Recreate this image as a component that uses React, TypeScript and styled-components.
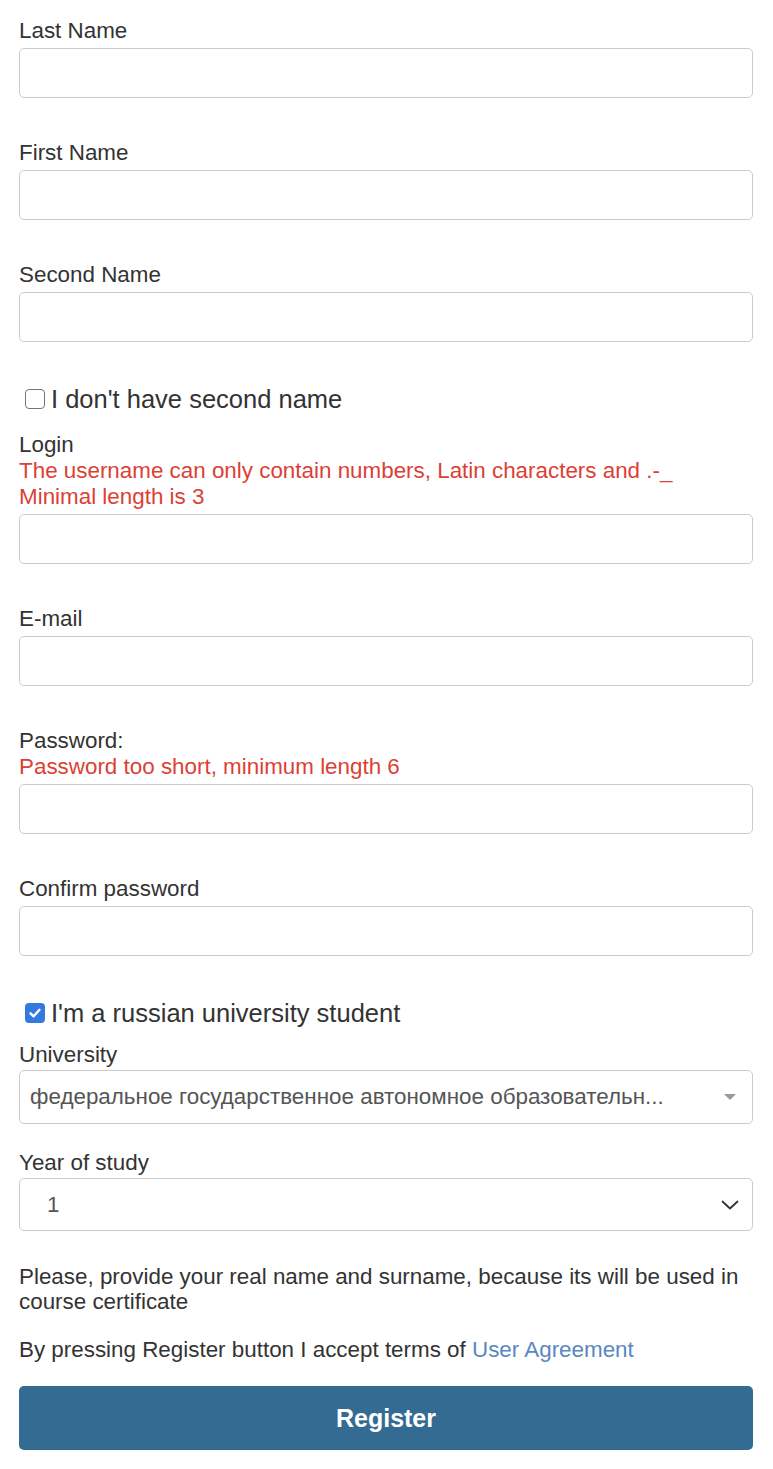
import React from "react";
import styled, { createGlobalStyle } from "styled-components";

const GlobalStyle = createGlobalStyle`
  html, body {
    margin: 0;
    padding: 0;
    background: #ffffff;
  }
  body {
    font-family: "Liberation Sans", Arial, sans-serif;
    color: #333333;
  }
  * { box-sizing: border-box; }
`;

const Form = styled.form`
  display: flex;
  flex-direction: column;
  padding: 18px 20px 19px 19px;
`;

const Group = styled.div<{ $mb?: number }>`
  display: flex;
  flex-direction: column;
  margin-bottom: ${(p) => (p.$mb ?? 42)}px;
`;

const Label = styled.label`
  font-size: 22.4px;
  line-height: 26px;
  color: #333333;
`;

const ErrorText = styled.div`
  font-size: 22.4px;
  line-height: 26px;
  color: #dc3f35;
`;

const Input = styled.input`
  height: 50px;
  margin-top: 4px;
  width: 100%;
  border: 1px solid #cccccc;
  border-radius: 5px;
  background: #ffffff;
  font-size: 20px;
  padding: 0 12px;
  font-family: inherit;
  outline: none;
`;

const CheckRow = styled.label<{ $mb: number }>`
  display: flex;
  align-items: center;
  height: 30px;
  padding-left: 6px;
  margin-bottom: ${(p) => p.$mb}px;
  font-size: 25.5px;
  color: #333333;
  cursor: pointer;
`;

const Box = styled.span<{ $checked: boolean }>`
  width: 20px;
  height: 20px;
  border-radius: 4px;
  border: ${(p) => (p.$checked ? "none" : "1.5px solid #767676")};
  background: ${(p) => (p.$checked ? "#3479e0" : "#ffffff")};
  display: flex;
  align-items: center;
  justify-content: center;
  margin-right: 6px;
  flex-shrink: 0;
`;

const HiddenCheck = styled.input`
  position: absolute;
  opacity: 0;
  width: 0;
  height: 0;
`;

const SelectBox = styled.div<{ $h: number }>`
  position: relative;
  margin-top: 2px;
  height: ${(p) => p.$h}px;
  border: 1px solid #cccccc;
  border-radius: 5px;
  display: flex;
  align-items: center;
  background: #ffffff;
`;

const SelectText = styled.span<{ $pl: number }>`
  flex: 1;
  padding-left: ${(p) => p.$pl}px;
  font-size: 22.4px;
  color: #555555;
  white-space: nowrap;
  overflow: hidden;
`;

const Arrow = styled.span`
  width: 40px;
  display: flex;
  align-items: center;
  justify-content: center;
  margin-right: 2px;
`;

const Paragraph = styled.p<{ $mb: number }>`
  margin: 0 0 ${(p) => p.$mb}px 0;
  font-size: 22.4px;
  line-height: 25px;
  color: #333333;
`;

const Link = styled.a`
  color: #5a87c0;
  text-decoration: none;
`;

const Button = styled.button`
  height: 64px;
  width: 100%;
  border: none;
  border-radius: 5px;
  background: #346b93;
  color: #ffffff;
  font-family: inherit;
  font-weight: bold;
  font-size: 25px;
  cursor: pointer;
`;

function Field({ label, errors = [] }: { label: string; errors?: string[] }) {
  return (
    <Group>
      <Label>{label}</Label>
      {errors.map((e) => (
        <ErrorText key={e}>{e}</ErrorText>
      ))}
      <Input />
    </Group>
  );
}

function Check({ label, checked, mb }: { label: string; checked: boolean; mb: number }) {
  return (
    <CheckRow $mb={mb}>
      <HiddenCheck type="checkbox" defaultChecked={checked} />
      <Box $checked={checked}>
        {checked && (
          <svg width="14" height="14" viewBox="0 0 14 14">
            <path d="M2.5 7.3 L5.6 10.3 L11.5 3.8" fill="none" stroke="#ffffff" strokeWidth="2.4" strokeLinecap="round" strokeLinejoin="round" />
          </svg>
        )}
      </Box>
      {label}
    </CheckRow>
  );
}

export default function App() {
  return (
    <>
      <GlobalStyle />
      <Form onSubmit={(e) => e.preventDefault()}>
        <Field label="Last Name" />
        <Field label="First Name" />
        <Field label="Second Name" />
        <Check label="I don't have second name" checked={false} mb={18} />
        <Field
          label="Login"
          errors={[
            "The username can only contain numbers, Latin characters and .-_",
            "Minimal length is 3",
          ]}
        />
        <Field label="E-mail" />
        <Field label="Password:" errors={["Password too short, minimum length 6"]} />
        <Field label="Confirm password" />
        <Check label="I'm a russian university student" checked={true} mb={14} />
        <Group $mb={26}>
          <Label>University</Label>
          <SelectBox $h={54}>
            <SelectText $pl={10}>федеральное государственное автономное образовательн...</SelectText>
            <Arrow>
              <svg width="12" height="6" viewBox="0 0 12 6">
                <path d="M0 0 L12 0 L6 6 Z" fill="#999999" />
              </svg>
            </Arrow>
          </SelectBox>
        </Group>
        <Group $mb={33}>
          <Label>Year of study</Label>
          <SelectBox $h={53}>
            <SelectText $pl={27}>1</SelectText>
            <Arrow>
              <svg width="18" height="10" viewBox="0 0 18 10">
                <path d="M1.5 1.5 L9 8.5 L16.5 1.5" fill="none" stroke="#333333" strokeWidth="1.8" strokeLinecap="round" strokeLinejoin="round" />
              </svg>
            </Arrow>
          </SelectBox>
        </Group>
        <Paragraph $mb={23}>
          Please, provide your real name and surname, because its will be used in course certificate
        </Paragraph>
        <Paragraph $mb={24}>
          By pressing Register button I accept terms of <Link href="#">User Agreement</Link>
        </Paragraph>
        <Button type="submit">Register</Button>
      </Form>
    </>
  );
}
